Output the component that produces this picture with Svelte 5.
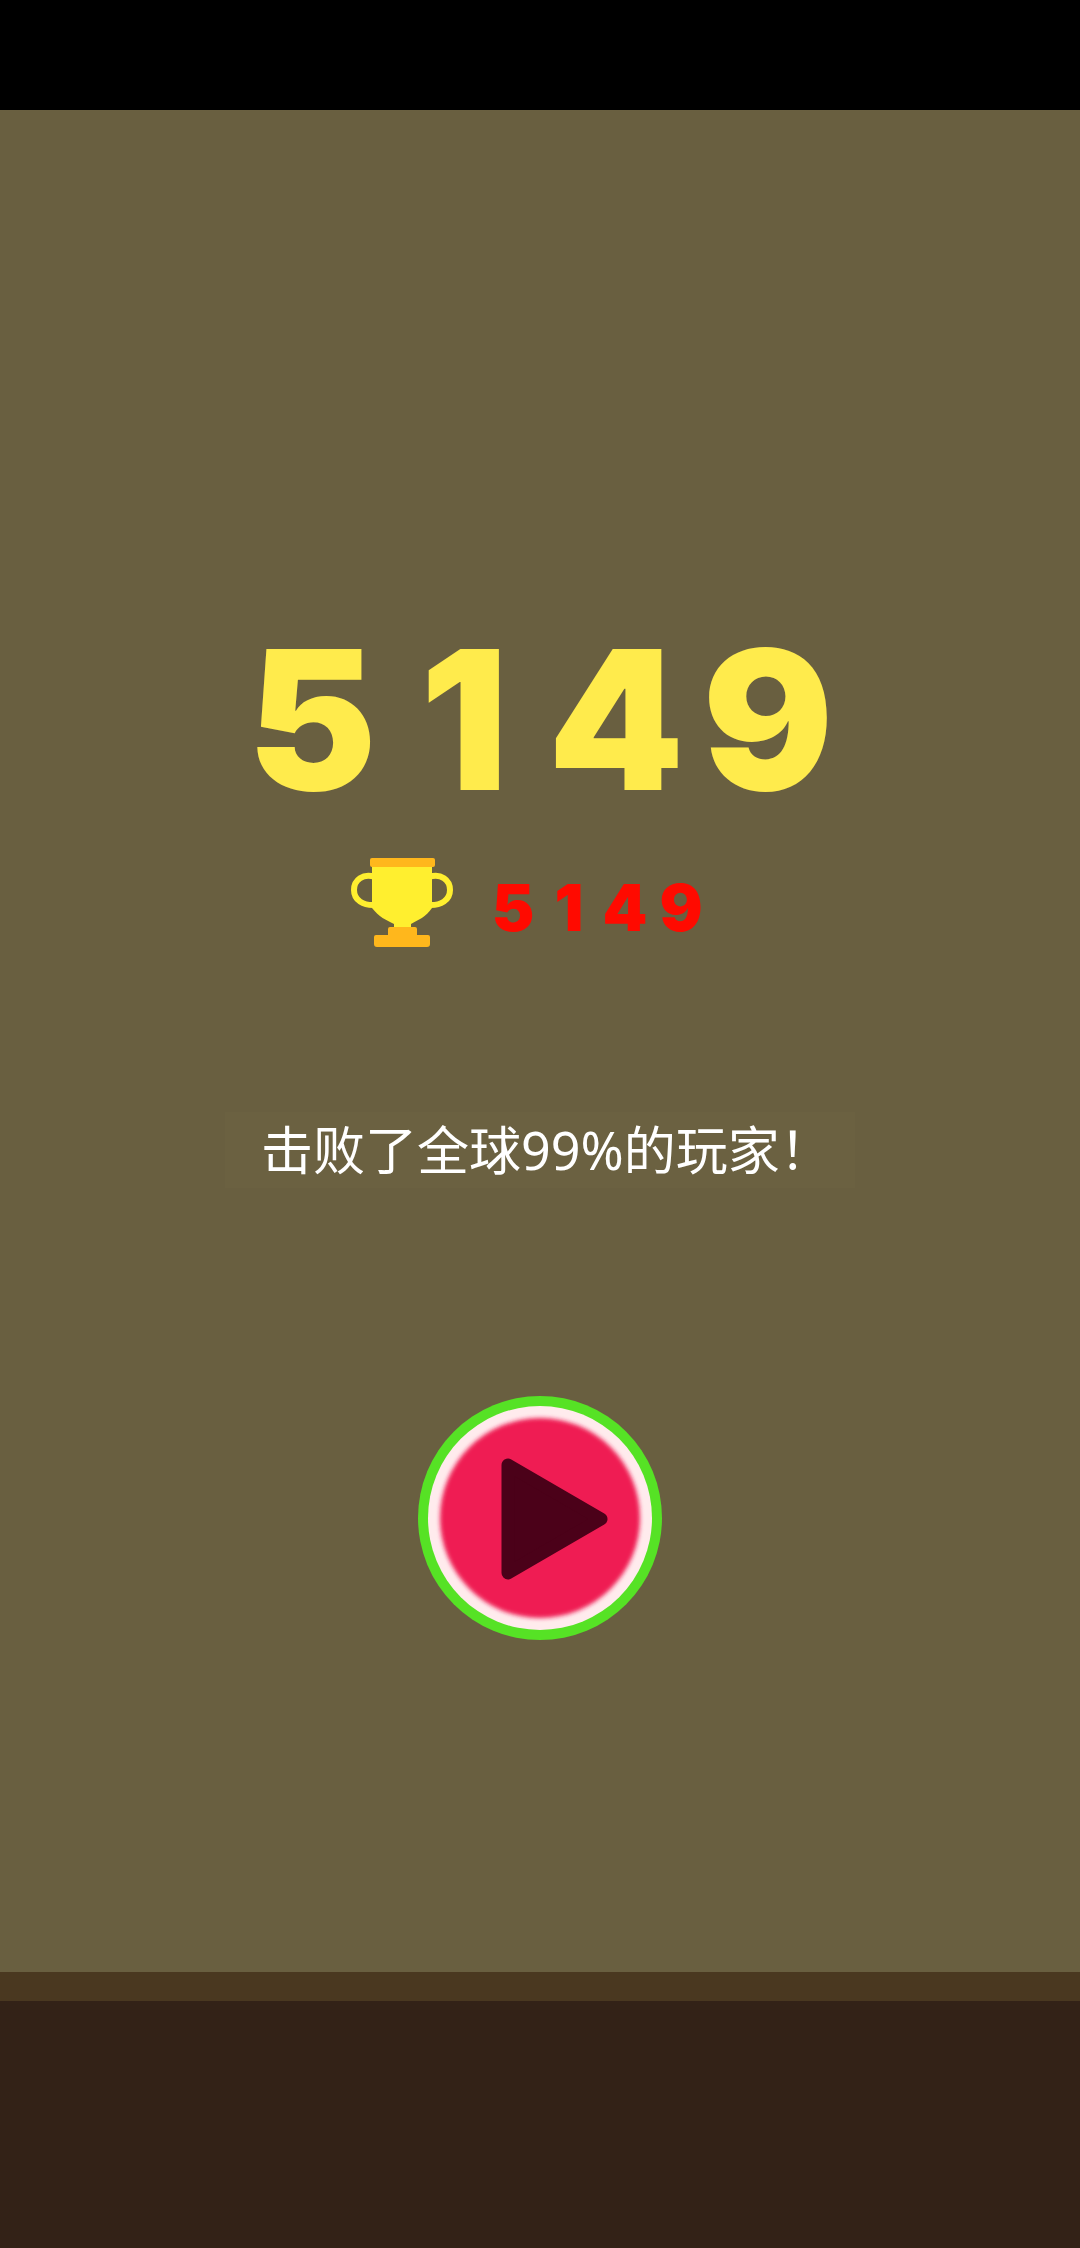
<script>
  let score = $state(5149);
  let best = $state(5149);
  let rank = $state(99);

  let scoreDigits = $derived(String(score).split(''));
  let bestDigits = $derived(String(best).split(''));
</script>

<div class="screen">
  <div class="status-bar"></div>

  <main>
    <div class="digits score">
      {#each scoreDigits as digit}
        <span>{digit}</span>
      {/each}
    </div>

    <div class="best">
      <svg class="trophy" viewBox="0 0 102 90" aria-hidden="true">
        <path
          d="M24 19C12 15 3 22 3 32C3 42 12 48 25 47M78 19C90 15 99 22 99 32C99 42 90 48 77 47"
          fill="none"
          stroke="#ffef2f"
          stroke-width="6"
        />
        <path
          d="M21 8H81V50C75 59 67 62 60 66V71H43V66C35 62 28 59 21 50Z"
          fill="#ffef2f"
        />
        <rect x="19" y="0" width="65" height="9" rx="2" fill="#ffb71c" />
        <path
          d="M39 69H64Q66 69 66 71V77H77Q79 77 79 79V86Q79 89 76 89H26Q23 89 23 86V79Q23 77 25 77H37V71Q37 69 39 69Z"
          fill="#ffb71c"
        />
      </svg>
      <div class="digits best-score">
        {#each bestDigits as digit}
          <span>{digit}</span>
        {/each}
      </div>
    </div>

    <p class="rank">击败了全球{rank}%的玩家！</p>

    <button class="play" type="button" aria-label="Play">
      <svg viewBox="0 0 244 244" aria-hidden="true">
        <defs>
          <filter id="soft" x="-10%" y="-10%" width="120%" height="120%">
            <feGaussianBlur stdDeviation="2" />
          </filter>
        </defs>
        <circle cx="122" cy="122" r="122" fill="#56e225" />
        <circle cx="122" cy="122" r="112" fill="#ffebed" />
        <circle cx="122" cy="122" r="100" fill="#ef1d53" filter="url(#soft)" />
        <path
          d="M90 69V177L183 123Z"
          fill="#4b0119"
          stroke="#4b0119"
          stroke-width="13"
          stroke-linejoin="round"
        />
      </svg>
    </button>
  </main>

  <div class="ground"></div>
</div>

<style>
  :global(body) {
    margin: 0;
    background: #332217;
  }

  .screen {
    display: flex;
    flex-direction: column;
    min-height: 100vh;
    background: #695f40;
  }

  .status-bar {
    height: 110px;
    background: #000;
  }

  main {
    flex: 1;
    display: flex;
    flex-direction: column;
    align-items: center;
    padding-top: 510px;
  }

  .digits {
    display: grid;
    grid-auto-flow: column;
    font-family: Inter, 'Open Sans', sans-serif;
    font-weight: 900;
    text-align: center;
  }

  .score {
    grid-auto-columns: 152px;
    font-size: 194px;
    line-height: 200px;
    color: #ffeb4c;
  }

  .best {
    display: flex;
    align-items: flex-end;
    gap: 32px;
    margin-top: 38px;
    padding-right: 20px;
  }

  .trophy {
    width: 102px;
    height: 90px;
  }

  .best-score {
    grid-auto-columns: 56px;
    font-size: 64px;
    line-height: 80px;
    color: #ff0a00;
  }

  .rank {
    box-sizing: border-box;
    width: 630px;
    max-width: 100%;
    margin: 164px 0 0;
    padding: 0 36px;
    background: #6b6141;
    color: #fff;
    font-family: 'Noto Sans', 'Noto Sans CJK SC', sans-serif;
    font-size: 52px;
    font-weight: 400;
    line-height: 76px;
    white-space: nowrap;
  }

  .play {
    width: 244px;
    height: 244px;
    margin-top: 208px;
    padding: 0;
    border: none;
    border-radius: 50%;
    background: none;
    cursor: pointer;
  }

  .play svg {
    display: block;
    width: 100%;
    height: 100%;
  }

  .ground {
    height: 247px;
    border-top: 29px solid #4a3820;
    background: #332217;
  }
</style>
